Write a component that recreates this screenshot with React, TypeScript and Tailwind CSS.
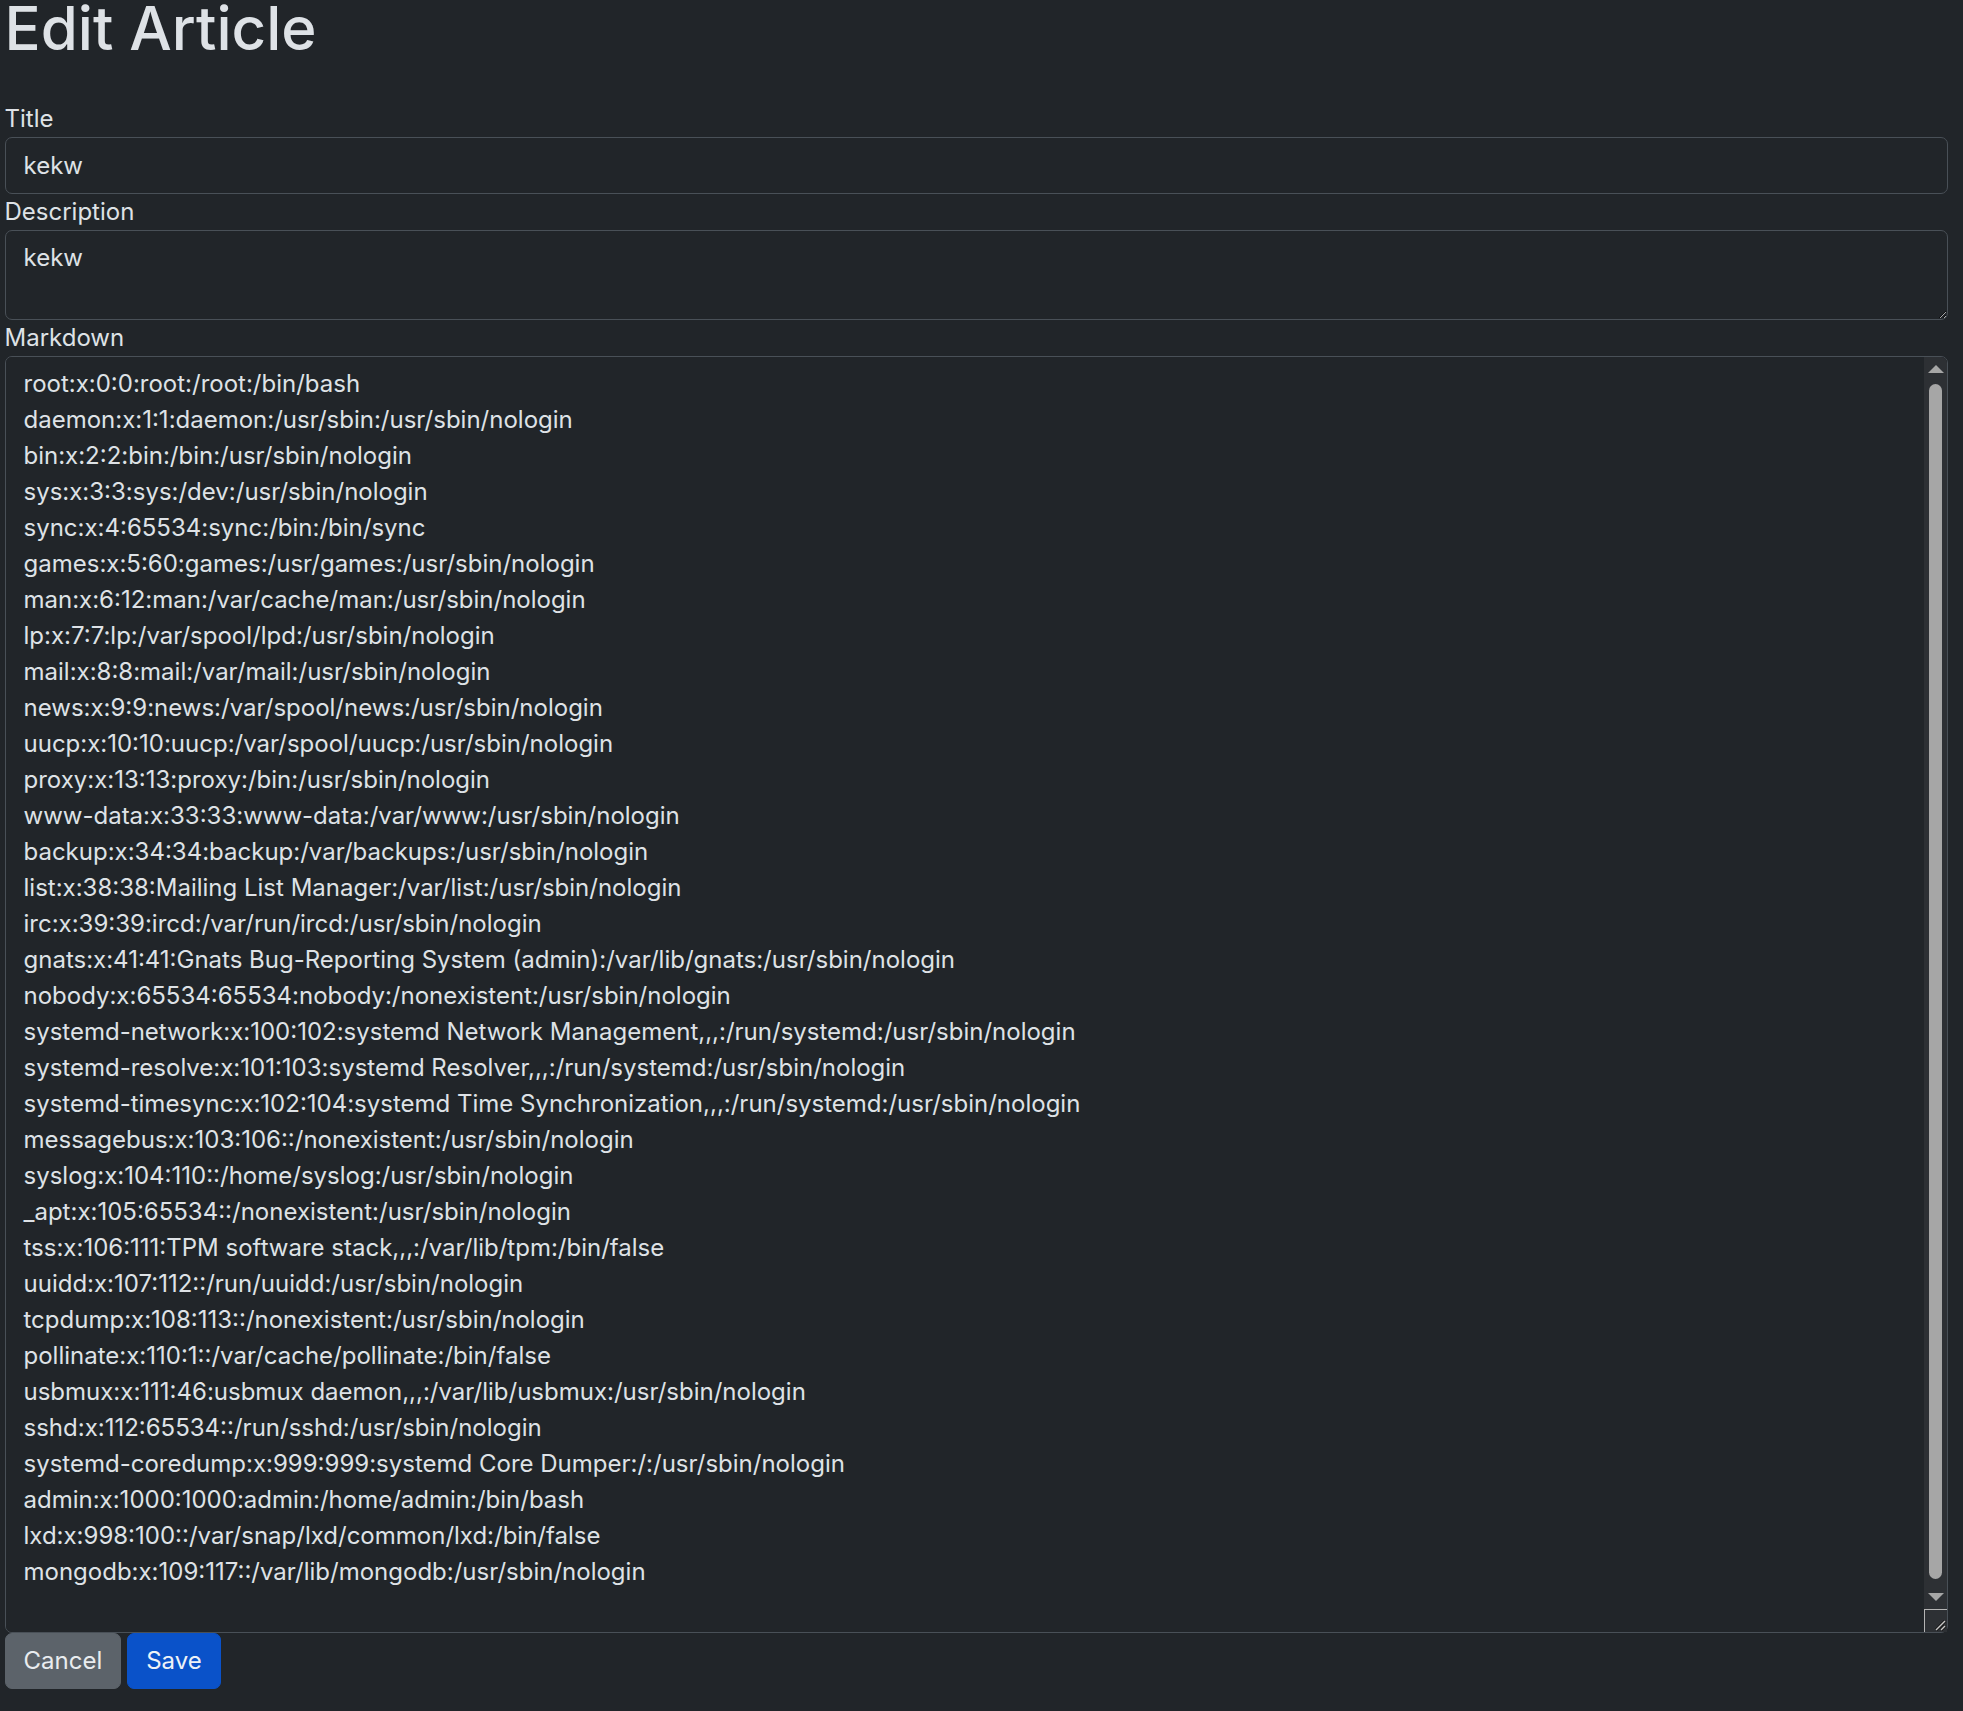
const passwd = `root:x:0:0:root:/root:/bin/bash
daemon:x:1:1:daemon:/usr/sbin:/usr/sbin/nologin
bin:x:2:2:bin:/bin:/usr/sbin/nologin
sys:x:3:3:sys:/dev:/usr/sbin/nologin
sync:x:4:65534:sync:/bin:/bin/sync
games:x:5:60:games:/usr/games:/usr/sbin/nologin
man:x:6:12:man:/var/cache/man:/usr/sbin/nologin
lp:x:7:7:lp:/var/spool/lpd:/usr/sbin/nologin
mail:x:8:8:mail:/var/mail:/usr/sbin/nologin
news:x:9:9:news:/var/spool/news:/usr/sbin/nologin
uucp:x:10:10:uucp:/var/spool/uucp:/usr/sbin/nologin
proxy:x:13:13:proxy:/bin:/usr/sbin/nologin
www-data:x:33:33:www-data:/var/www:/usr/sbin/nologin
backup:x:34:34:backup:/var/backups:/usr/sbin/nologin
list:x:38:38:Mailing List Manager:/var/list:/usr/sbin/nologin
irc:x:39:39:ircd:/var/run/ircd:/usr/sbin/nologin
gnats:x:41:41:Gnats Bug-Reporting System (admin):/var/lib/gnats:/usr/sbin/nologin
nobody:x:65534:65534:nobody:/nonexistent:/usr/sbin/nologin
systemd-network:x:100:102:systemd Network Management,,,:/run/systemd:/usr/sbin/nologin
systemd-resolve:x:101:103:systemd Resolver,,,:/run/systemd:/usr/sbin/nologin
systemd-timesync:x:102:104:systemd Time Synchronization,,,:/run/systemd:/usr/sbin/nologin
messagebus:x:103:106::/nonexistent:/usr/sbin/nologin
syslog:x:104:110::/home/syslog:/usr/sbin/nologin
_apt:x:105:65534::/nonexistent:/usr/sbin/nologin
tss:x:106:111:TPM software stack,,,:/var/lib/tpm:/bin/false
uuidd:x:107:112::/run/uuidd:/usr/sbin/nologin
tcpdump:x:108:113::/nonexistent:/usr/sbin/nologin
pollinate:x:110:1::/var/cache/pollinate:/bin/false
usbmux:x:111:46:usbmux daemon,,,:/var/lib/usbmux:/usr/sbin/nologin
sshd:x:112:65534::/run/sshd:/usr/sbin/nologin
systemd-coredump:x:999:999:systemd Core Dumper:/:/usr/sbin/nologin
admin:x:1000:1000:admin:/home/admin:/bin/bash
lxd:x:998:100::/var/snap/lxd/common/lxd:/bin/false
mongodb:x:109:117::/var/lib/mongodb:/usr/sbin/nologin

`;

// Bootstrap-style form control, scaled 1.5x like the screenshot
const control =
  "block w-full rounded-[7px] border border-[#495057] bg-[#212529] px-[18px] py-[9px] text-[24px] leading-[36px] text-[#dee2e6] outline-none";

// Dark-theme scrollbar drawn over the markdown box (headless hides the native one)
function FakeScrollbar() {
  return (
    <div className="pointer-events-none absolute top-[1px] right-[1px] bottom-[1px] flex w-[23px] flex-col items-center rounded-tr-[6px] bg-[#2d3034]">
      <svg width="16" height="8" viewBox="0 0 16 8" className="mt-[7.5px] shrink-0">
        <path d="M8 0 L16 8 L0 8 Z" fill="#a6a6a6" />
      </svg>
      <div className="mt-[11.5px] w-[13.5px] flex-1 rounded-full bg-[#a6a6a6]" />
      <svg width="16" height="8" viewBox="0 0 16 8" className="mt-[14px] shrink-0">
        <path d="M0 0 L16 0 L8 8 Z" fill="#a6a6a6" />
      </svg>
      <div className="relative mt-[8px] h-[23px] w-full shrink-0 border-t border-l border-[#b4b4b4] bg-[#2d3034]">
        <svg width="12" height="12" viewBox="0 0 12 12" className="absolute right-[1px] bottom-[1px]">
          <path d="M11 2 L2 11" stroke="#111" strokeWidth="3" />
          <path d="M11 7 L7 11" stroke="#111" strokeWidth="3" />
          <path d="M11 2 L2 11" stroke="#c8c8c8" strokeWidth="1.5" />
          <path d="M11 7 L7 11" stroke="#c8c8c8" strokeWidth="1.5" />
        </svg>
      </div>
    </div>
  );
}

export default function App() {
  return (
    <div className="flow-root min-h-screen bg-[#212529] font-['Inter','Noto_Sans',sans-serif] text-[#dee2e6] [color-scheme:dark]">
      <div className="pl-[4.5px] pr-[15px]">
        <h1 className="-mt-[8px] mb-[37px] text-[60px] font-medium leading-[1.2]">Edit Article</h1>

        <form onSubmit={(e) => e.preventDefault()}>
          <label htmlFor="title" className="block text-[24px] leading-[36px]">
            Title
          </label>
          <input id="title" type="text" defaultValue="kekw" className={`${control} h-[57px]`} />

          <label htmlFor="description" className="block text-[24px] leading-[36px]">
            Description
          </label>
          <textarea
            id="description"
            defaultValue="kekw"
            className={`${control} h-[90px] resize-y`}
          />

          <label htmlFor="markdown" className="block text-[24px] leading-[36px]">
            Markdown
          </label>
          <div className="relative">
            <textarea
              id="markdown"
              defaultValue={passwd}
              className={`${control} h-[1277px] resize-y overflow-y-auto pr-[40px]`}
            />
            <FakeScrollbar />
          </div>

          <div className="flex gap-[6px]">
            <button
              type="button"
              className="h-[56px] rounded-[7px] border border-[#5c636a] bg-[#5c636a] px-[18px] text-[24px] leading-[36px] text-[#e9ecef]"
            >
              Cancel
            </button>
            <button
              type="submit"
              className="h-[56px] rounded-[7px] border border-[#0a52c9] bg-[#0a52c9] px-[18px] text-[24px] leading-[36px] text-[#eef2f7]"
            >
              Save
            </button>
          </div>
        </form>
      </div>
    </div>
  );
}
